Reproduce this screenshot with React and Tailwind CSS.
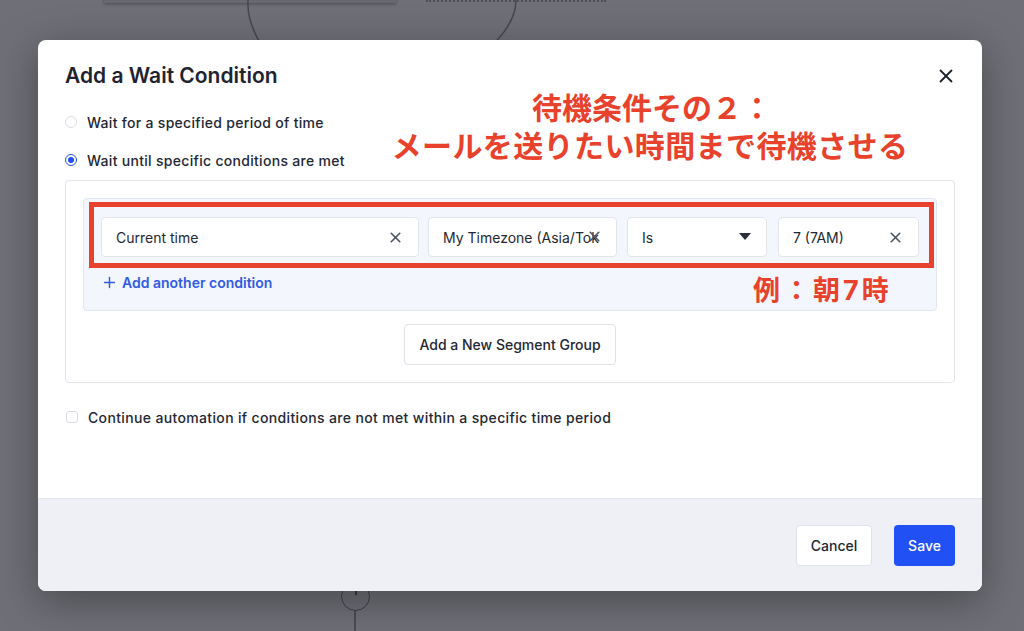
import { X, Plus } from "lucide-react";

const font = { fontFamily: "Inter, 'Noto Sans CJK JP', sans-serif" };

function Radio({ checked, label }) {
  return (
    <label className="flex items-center gap-[10px] h-[20px]">
      {checked ? (
        <span className="w-[12px] h-[12px] rounded-full border border-[#2151f5] flex items-center justify-center">
          <span className="w-[6px] h-[6px] rounded-full bg-[#2151f5]" />
        </span>
      ) : (
        <span className="w-[12px] h-[12px] rounded-full border border-[#d9dce3] bg-white" />
      )}
      <span className="text-[14px] font-medium text-[#232733] tracking-[0.3px]">{label}</span>
    </label>
  );
}

function Field({ width, text, icon }) {
  return (
    <div
      className="relative h-[40px] bg-white border border-[#e2e5ec] rounded-[4px] flex items-center pl-[14px] pr-[14px] shrink-0"
      style={{ width }}
    >
      <span className="flex-1 whitespace-nowrap text-[14px] text-[#232733]">{text}</span>
      {icon === "x" && <X size={17} strokeWidth={2.3} className="text-[#4b5262] shrink-0" />}
      {icon === "caret" && (
        <svg width="12" height="8" viewBox="0 0 12 8" className="shrink-0 mr-[1px]">
          <path d="M0 0h12L6 7z" fill="#2a2e38" />
        </svg>
      )}
    </div>
  );
}

export default function App() {
  return (
    <div className="relative w-[1024px] h-[631px] overflow-hidden bg-[#6f7077]" style={font}>
      {/* canvas behind the overlay */}
      <div className="absolute left-[104px] top-[-20px] w-[292px] h-[23px] bg-[#676870] shadow-[0_1px_3px_rgba(0,0,0,0.35)]" />
      <div className="absolute left-[426px] top-0 w-[180px] border-t-2 border-dotted border-[#4d4e58]" />
      <svg className="absolute left-0 top-0" width="1024" height="631">
        <path d="M248 0 C246 30, 268 55, 286 80" stroke="#45464f" strokeWidth="1.5" fill="none" />
        <path d="M516 0 C516 30, 486 50, 457 80" stroke="#45464f" strokeWidth="1.5" fill="none" />
        <line x1="355" y1="610" x2="355" y2="631" stroke="#3f4049" strokeWidth="1.5" />
      </svg>
      <div className="absolute left-[341px] top-[582px] w-[29px] h-[29px] rounded-full border-[1.5px] border-[#3f4049] flex items-center justify-center">
        <Plus size={16} strokeWidth={2.4} className="text-[#2b2c33] -mt-[14px]" />
      </div>

      <div className="pt-[40px] pl-[38px]">
        <div className="relative w-[944px] h-[551px] bg-white rounded-[8px] overflow-hidden flex flex-col shadow-[0_10px_40px_rgba(0,0,0,0.35)]">
          <div className="flex-1 px-[27px]">
            <div className="flex items-center justify-between h-[28px] mt-[22px]">
              <h2 className="text-[21px] font-semibold text-[#1f2330]">Add a Wait Condition</h2>
              <X size={22} strokeWidth={2} className="text-[#1f2330] -mr-[2px]" />
            </div>

            <div className="flex flex-col gap-[18px] mt-[22px]">
              <Radio checked={false} label="Wait for a specified period of time" />
              <Radio checked label="Wait until specific conditions are met" />
            </div>

            <div className="mt-[10px] border border-[#e2e5ec] rounded-[4px] p-[17px] pb-[17px]">
              <div className="relative bg-[#f4f6fd] border border-[#e2e6f0] rounded-[4px] pt-[18px] pl-[17px] pr-[17px] pb-[18px]">
                <div className="flex items-center">
                  <Field width={318} text="Current time" icon="x" />
                  <div className="w-[9px]" />
                  <div className="relative">
                    <Field width={189} text="My Timezone (Asia/Tok" />
                    <X size={17} strokeWidth={2.3} className="absolute right-[14px] top-[11px] text-[#4b5262]" />
                  </div>
                  <div className="w-[10px]" />
                  <Field width={140} text="Is" icon="caret" />
                  <div className="w-[11px]" />
                  <Field width={141} text="7 (7AM)" icon="x" />
                </div>
                <div className="flex items-center gap-[4px] mt-[15px] h-[20px]">
                  <Plus size={17} strokeWidth={2} className="text-[#2f5be3]" />
                  <span className="text-[14px] font-semibold text-[#2f5be3]">Add another condition</span>
                </div>

                {/* red annotation box */}
                <div className="absolute left-[5px] top-[3px] w-[845px] h-[66px] border-[5px] border-[#e8412c]" />
                <div className="absolute left-[669px] top-[76px] text-[27px] font-bold text-[#e8412c] leading-[32px] tracking-[3px]">
                  例：朝7時
                </div>
              </div>

              <div className="flex justify-center mt-[13px]">
                <button className="h-[41px] px-[14px] bg-white border border-[#dfe2e9] rounded-[4px] text-[14px] font-medium text-[#232733]">
                  Add a New Segment Group
                </button>
              </div>
            </div>

            <label className="flex items-center gap-[10px] mt-[24px] pl-[1px] h-[20px]">
              <span className="w-[12px] h-[12px] rounded-[3px] border border-[#d9dce3] bg-white" />
              <span className="text-[14px] font-medium text-[#232733] tracking-[0.35px]">
                Continue automation if conditions are not met within a specific time period
              </span>
            </label>
          </div>

          <div className="h-[93px] bg-[#eef0f5] border-t border-[#e2e5ec] flex items-center justify-end gap-[22px] px-[27px]">
            <button className="h-[41px] w-[76px] bg-white border border-[#dfe2e9] rounded-[4px] text-[14px] font-medium text-[#232733]">
              Cancel
            </button>
            <button className="h-[41px] w-[61px] bg-[#2151f5] rounded-[4px] text-[14px] font-medium text-white">
              Save
            </button>
          </div>

          {/* Japanese annotation */}
          <div className="absolute left-0 top-[49px] w-[944px] flex flex-col items-center text-[#e8412c] font-bold text-[30px] leading-[38px] pl-[280px]">
            <span className="pl-[4px]">待機条件その２：</span>
            <span className="tracking-[0.4px]">メールを送りたい時間まで待機させる</span>
          </div>
        </div>
      </div>
    </div>
  );
}
